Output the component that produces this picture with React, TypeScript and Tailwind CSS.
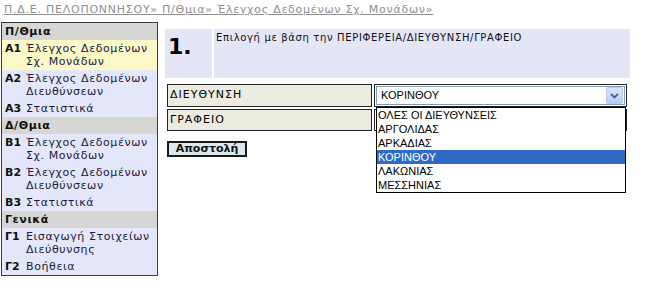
const font = { fontFamily: '"DejaVu Sans", Verdana, sans-serif' };

type Item = { code: string; lines: string[]; active?: boolean };
type Group = { title: string; items: Item[] };

const groups: Group[] = [
  {
    title: "Π/Θμια",
    items: [
      { code: "A1", lines: ["Έλεγχος Δεδομένων", "Σχ. Μονάδων"], active: true },
      { code: "A2", lines: ["Έλεγχος Δεδομένων", "Διευθύνσεων"] },
      { code: "A3", lines: ["Στατιστικά"] },
    ],
  },
  {
    title: "Δ/Θμια",
    items: [
      { code: "B1", lines: ["Έλεγχος Δεδομένων", "Σχ. Μονάδων"] },
      { code: "B2", lines: ["Έλεγχος Δεδομένων", "Διευθύνσεων"] },
      { code: "B3", lines: ["Στατιστικά"] },
    ],
  },
  {
    title: "Γενικά",
    items: [
      { code: "Γ1", lines: ["Εισαγωγή Στοιχείων", "Διεύθυνσης"] },
      { code: "Γ2", lines: ["Βοήθεια"] },
    ],
  },
];

const options = ["ΟΛΕΣ ΟΙ ΔΙΕΥΘΥΝΣΕΙΣ", "ΑΡΓΟΛΙΔΑΣ", "ΑΡΚΑΔΙΑΣ", "ΚΟΡΙΝΘΟΥ", "ΛΑΚΩΝΙΑΣ", "ΜΕΣΣΗΝΙΑΣ"];

const Sidebar = () => (
  <nav className="ml-[1px] w-[157px] h-[254px] border border-[#3a3a3a] bg-[#e4e7f9] text-[11px] leading-[13px] tracking-[0.6px] text-[#1a1a40]">
    {groups.map((g) => (
      <div key={g.title}>
        <div className="h-[17px] pl-[3px] pt-[2px] bg-[#d6d6d4] font-bold text-[#111]">{g.title}</div>
        {g.items.map((it) => (
          <div key={it.code} className={`flex pl-[3px] py-[2px] ${it.active ? "bg-[#fbf9c8]" : ""}`}>
            <span className="w-[21px] shrink-0 font-bold tracking-normal text-[#111]">{it.code}</span>
            <div className="flex flex-col">
              {it.lines.map((l) => (
                <span key={l}>{l}</span>
              ))}
            </div>
          </div>
        ))}
      </div>
    ))}
  </nav>
);

const Chevron = () => (
  <svg width="9" height="6" viewBox="0 0 9 6">
    <path d="M1 1 L4.5 4.5 L8 1" fill="none" stroke="#4d6185" strokeWidth="1.8" />
  </svg>
);

export default function App() {
  return (
    <div className="w-[655px] h-[289px] bg-white overflow-hidden" style={font}>
      <div className="h-[22px] pl-[4px] pt-[3px] text-[11px] leading-[13px] tracking-[0.75px] text-[#8f8f8f] underline">
        Π.Δ.Ε. ΠΕΛΟΠΟΝΝΗΣΟΥ» Π/Θμια» Έλεγχος Δεδομένων Σχ. Μονάδων»
      </div>
      <div className="flex">
        <Sidebar />
        <main className="ml-[7px] pt-[7px] w-[465px]">
          <div className="flex h-[49px] gap-[2px]">
            <div className="w-[47px] bg-[#e4e6f8] pl-[3px] pt-[5px] text-[22px] leading-[26px] font-bold text-black">1.</div>
            <div className="flex-1 bg-[#e4e6f8] pl-[2px] pt-[3px] text-[10px] leading-[12px] tracking-[0.65px] text-[#111]">
              Επιλογή με βάση την ΠΕΡΙΦΕΡΕΙΑ/ΔΙΕΥΘΥΝΣΗ/ΓΡΑΦΕΙΟ
            </div>
          </div>
          <div className="relative mt-[6px] ml-[2px] flex flex-col gap-[2px] text-[11px]">
            <div className="flex gap-[2px] h-[23px]">
              <div className="w-[205px] border border-[#222] bg-[#ecebdf] pl-[2px] flex items-center tracking-[1px]">ΔΙΕΥΘΥΝΣΗ</div>
              <div className="w-[253px] border border-[#222] bg-white p-[1px]">
                <div className="h-full border border-[#7f9db9] flex items-center justify-between pl-[4px] pr-[1px]" style={{ fontFamily: '"Liberation Sans", Arial, sans-serif' }}>
                  <span>ΚΟΡΙΝΘΟΥ</span>
                  <span className="w-[17px] h-[17px] rounded-[2px] bg-gradient-to-b from-[#dbe6fd] to-[#b6cbf6] border border-[#b9ccf2] flex items-center justify-center">
                    <Chevron />
                  </span>
                </div>
              </div>
            </div>
            <div className="flex gap-[2px] h-[22px]">
              <div className="w-[205px] border border-[#222] bg-[#ecebdf] pl-[2px] flex items-center tracking-[1px]">ΓΡΑΦΕΙΟ</div>
              <div className="w-[253px] border border-[#222] bg-white" />
            </div>
            <div className="mt-[8px]">
              <button className="w-[80px] h-[16px] border-2 border-[#1a1a1a] bg-[#dde8ee] font-bold text-[11px] leading-[12px] text-[#111]">
                Αποστολή
              </button>
            </div>
            <ul
              className="absolute left-[209px] top-[23px] w-[250px] border border-black bg-white text-[11px] leading-[14px] text-black"
              style={{ fontFamily: '"Liberation Sans", Arial, sans-serif' }}
            >
              {options.map((o) => (
                <li key={o} className={`pl-[1px] h-[14px] ${o === "ΚΟΡΙΝΘΟΥ" ? "bg-[#316ac5] text-white" : ""}`}>
                  {o}
                </li>
              ))}
            </ul>
          </div>
        </main>
      </div>
    </div>
  );
}
